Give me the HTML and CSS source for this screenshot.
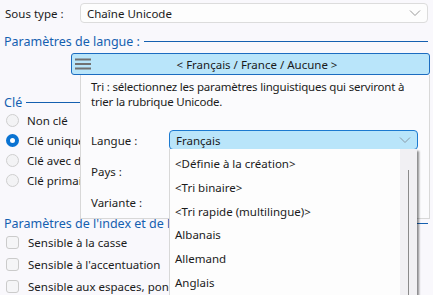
FILE: index.html
```html
<!DOCTYPE html>
<html lang="fr">
<head>
  <meta charset="UTF-8">
  <title>Sous type</title>
  <link rel="stylesheet" href="styles.css">
</head>
<body>
  <div class="page">
    <div class="type-row">
      <span class="label">Sous type :</span>
      <div class="select">
        <span>Chaîne Unicode</span>
        <svg class="chevron" width="12" height="8" viewBox="0 0 12 8"><path d="M1 1.5 L6 6.5 L11 1.5" fill="none" stroke="#9a9a9a" stroke-width="1"/></svg>
      </div>
    </div>

    <div class="group-title lang-title">Paramètres de langue :<span class="rule"></span></div>

    <div class="group-title key-title">Clé<span class="rule"></span></div>
    <ul class="options radios">
      <li><span class="radio"></span><span class="text">Non clé</span></li>
      <li><span class="radio checked"></span><span class="text">Clé unique</span></li>
      <li><span class="radio"></span><span class="text">Clé avec doublons</span></li>
      <li><span class="radio"></span><span class="text">Clé primaire</span></li>
    </ul>

    <div class="group-title index-title">Paramètres de l'index et de la recherche<span class="rule"></span></div>
    <ul class="options checks">
      <li><span class="check"></span><span class="text">Sensible à la casse</span></li>
      <li><span class="check"></span><span class="text">Sensible à l'accentuation</span></li>
      <li><span class="check"></span><span class="text">Sensible aux espaces, ponctuation</span></li>
    </ul>
  </div>

  <div class="popup">
    <div class="popup-head">
      <svg class="burger" width="16" height="12" viewBox="0 0 16 12"><rect x="0" y="0.5" width="16" height="2" fill="#717171"/><rect x="0" y="5" width="16" height="2" fill="#717171"/><rect x="0" y="9.5" width="16" height="2" fill="#717171"/></svg>
      <span class="head-text">&lt; Français / France / Aucune &gt;</span>
    </div>
    <div class="popup-body">
      <p class="hint">Tri : sélectionnez les paramètres linguistiques qui serviront à<br>trier la rubrique Unicode.</p>
      <div class="field">
        <span class="label">Langue :</span>
        <div class="select active">
          <span>Français</span>
          <svg class="chevron" width="12" height="8" viewBox="0 0 12 8"><path d="M1 1.5 L6 6.5 L11 1.5" fill="none" stroke="#8a9aa6" stroke-width="1"/></svg>
        </div>
      </div>
      <div class="field"><span class="label">Pays :</span></div>
      <div class="field"><span class="label">Variante :</span></div>
    </div>
  </div>

  <div class="dropdown">
    <ul class="items">
      <li>&lt;Définie à la création&gt;</li>
      <li>&lt;Tri binaire&gt;</li>
      <li>&lt;Tri rapide (multilingue)&gt;</li>
      <li>Albanais</li>
      <li>Allemand</li>
      <li>Anglais</li>
    </ul>
    <div class="scrollbar"><span class="thumb"></span></div>
  </div>
</body>
</html>
```

FILE: styles.css
```css
body {
  margin: 0;
  width: 433px;
  height: 295px;
  overflow: hidden;
  position: relative;
  background-color: #f9f8fc;
  font-family: "Noto Sans", sans-serif;
  font-size: 11.5px;
  color: #1b1b1b;
}
.page {
  padding: 3px 5px 0 4px;
}
.type-row {
  display: flex;
  align-items: center;
  height: 20px;
}
.type-row .label {
  width: 75px;
  padding-left: 1px;
}
.select {
  flex: 1;
  height: 18px;
  border: 1px solid #dcdcdc;
  border-radius: 4px;
  background-color: #fdfdfd;
  display: flex;
  align-items: center;
  justify-content: space-between;
  padding: 0 6px;
}
.chevron {
  display: block;
}
.group-title {
  display: flex;
  align-items: center;
  color: #1560b0;
  font-size: 12.5px;
  white-space: nowrap;
  overflow: hidden;
}
.rule {
  flex: 1;
  height: 1px;
  background-color: #1560b0;
  margin-left: 4px;
}
.lang-title {
  margin-top: 10px;
  height: 16px;
}
.key-title {
  margin-top: 45px;
  height: 16px;
}
.index-title {
  margin-top: 25px;
  height: 16px;
}
.options {
  list-style: none;
  margin: 0;
  padding: 0;
}
.options li {
  display: flex;
  align-items: center;
  height: 20px;
  white-space: nowrap;
}
.options .text {
  overflow: hidden;
}
.radios .text {
  width: 53px;
}
.checks li {
  height: 22px;
}
.checks .text {
  width: 141px;
}
.radio {
  flex: none;
  width: 13px;
  height: 13px;
  border-radius: 50%;
  border: 1px solid #cfcfcf;
  background-color: #f3f3f5;
  margin: 0 8px 0 2px;
  box-sizing: border-box;
}
.radio.checked {
  border: 4px solid #0a73d2;
  background-color: #ffffff;
}
.check {
  flex: none;
  width: 13px;
  height: 13px;
  border-radius: 3px;
  border: 1px solid #cbcbcb;
  background-color: #f5f5f7;
  margin: 0 9px 0 2px;
  box-sizing: border-box;
}

/* fenêtre des paramètres de langue */
.popup {
  position: absolute;
  left: 71px;
  top: 53px;
  width: 359px;
}
.popup-head {
  height: 20px;
  border: 1px solid #1c6cc0;
  border-radius: 3px;
  background-color: #b9e5fa;
  display: flex;
  align-items: center;
}
.burger {
  margin-left: 3px;
}
.head-text {
  flex: 1;
  text-align: center;
  margin-right: 6px;
}
.popup-body {
  margin-left: 9px;
  height: 139px;
  border-left: 1px solid #d8d8d8;
  border-right: 1px solid #d8d8d8;
  border-bottom: 1px solid #d8d8d8;
  background-color: #fbfbfd;
  padding: 4px 0 0 10px;
}
.hint {
  margin: 0 0 21px;
  line-height: 15px;
  letter-spacing: -0.2px;
}
.field {
  display: flex;
  align-items: center;
  height: 20px;
  margin-bottom: 11px;
}
.field .label {
  width: 78px;
}
.field .select.active {
  flex: none;
  width: 235px;
  border-color: #1c7ad0;
  background-color: #b9e5fa;
}

/* liste déroulante */
.dropdown {
  position: absolute;
  left: 169px;
  top: 149px;
  width: 247px;
  height: 160px;
  background-color: #fdfdfd;
  border-left: 1px solid #d8d8d8;
  box-shadow: 2px 2px 2px rgba(0, 0, 0, 0.45);
  display: flex;
}
.items {
  list-style: none;
  margin: 0;
  padding: 3px 0 0 5px;
  flex: 1;
}
.items li {
  height: 23.8px;
  line-height: 23.8px;
}
.scrollbar {
  width: 17px;
  background-color: #f1f0f3;
  position: relative;
}
.thumb {
  position: absolute;
  left: 8px;
  top: 21px;
  bottom: 0;
  width: 1px;
  background-color: #8a8a8a;
}
```
